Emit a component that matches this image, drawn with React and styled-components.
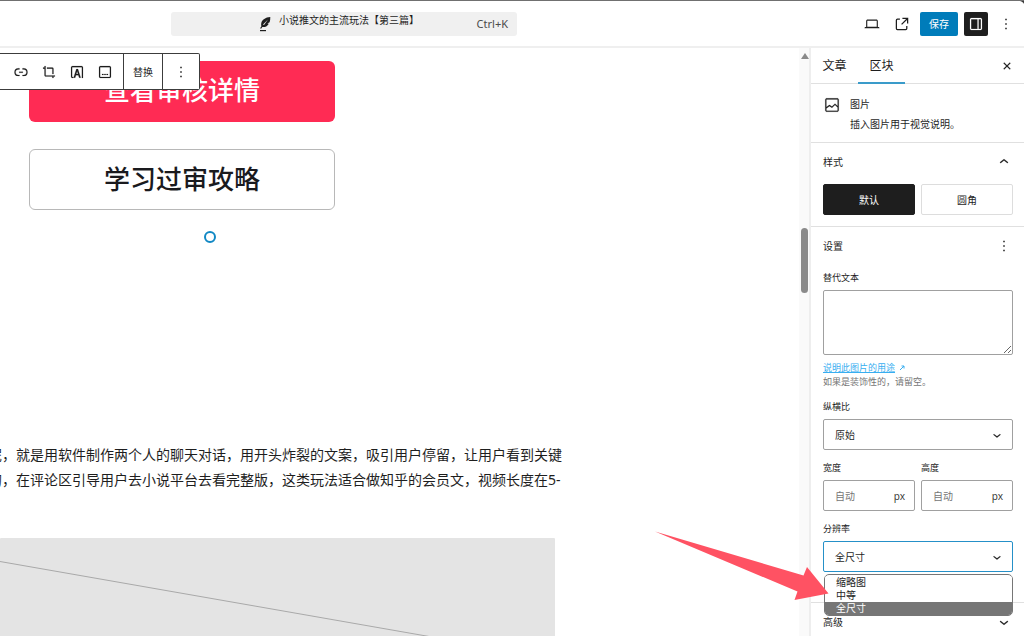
import React from "react";
import styled, { createGlobalStyle, css } from "styled-components";

const GlobalStyle = createGlobalStyle`
  *, *::before, *::after { box-sizing: border-box; }
  body {
    margin: 0;
    background: #fff;
    color: #1e1e1e;
    font-family: "Noto Sans", "Noto Sans CJK SC", sans-serif;
    font-size: 10px;
    line-height: 16px;
  }
  button, input, select, textarea { font: inherit; color: inherit; margin: 0; }
  h2, p, ul { margin: 0; padding: 0; font-size: inherit; font-weight: 400; }
`;

const paths = {
  link: "M10 17.389H8.444A5.194 5.194 0 1 1 8.444 7H10v1.5H8.444a3.694 3.694 0 0 0 0 7.389H10v1.5ZM14 7h1.556a5.194 5.194 0 0 1 0 10.39H14v-1.5h1.556a3.694 3.694 0 0 0 0-7.39H14V7Zm-4.5 6h5v-1.5h-5V13Z",
  crop: "M18 20v-2h2v-1.5H7.75a.25.25 0 0 1-.25-.25V4H6v2H4v1.5h2v8.75c0 .966.784 1.75 1.75 1.75h8.75v2H18ZM9.273 7.5h6.977a.25.25 0 0 1 .25.25v6.977H18V7.75A1.75 1.75 0 0 0 16.25 6H9.273v1.5Z",
  overlay:
    "M6 4a2 2 0 0 0-2 2v12a2 2 0 0 0 2 2h1v-1.5H6a.5.5 0 0 1-.5-.5V6a.5.5 0 0 1 .5-.5h12a.5.5 0 0 1 .5.5v14H20V6a2 2 0 0 0-2-2H6Zm5.1 4L7.4 19.5h2.2l1-3.1h3.2l1 3.1H17L13.3 8h-2.2Zm1.1 3 1.1 3.6h-2.2l1.1-3.6Z",
  caption:
    "M6 5.5h12a.5.5 0 0 1 .5.5v12a.5.5 0 0 1-.5.5H6a.5.5 0 0 1-.5-.5V6a.5.5 0 0 1 .5-.5ZM4 6a2 2 0 0 1 2-2h12a2 2 0 0 1 2 2v12a2 2 0 0 1-2 2H6a2 2 0 0 1-2-2V6Zm4 10h2v-1.5H8V16Zm5 0h-2v-1.5h2V16Zm1 0h2v-1.5h-2V16Z",
  more: "M13 19h-2v-2h2v2zm0-6h-2v-2h2v2zm0-6h-2V5h2v2z",
  laptop:
    "M20.5 16h-.7V8c0-1.1-.9-2-2-2H6.2c-1.1 0-2 .9-2 2v8h-.7c-.8 0-1.5.7-1.5 1.5h20c0-.8-.7-1.5-1.5-1.5zM5.7 8c0-.3.2-.5.5-.5h11.6c.3 0 .5.2.5.5v7.6H5.7V8z",
  external:
    "M19.5 4.5h-7V6h4.44l-5.97 5.97 1.06 1.06L18 7.06v4.44h1.5v-7Zm-13 1a2 2 0 0 0-2 2v10a2 2 0 0 0 2 2h10a2 2 0 0 0 2-2v-3H17v3a.5.5 0 0 1-.5.5h-10a.5.5 0 0 1-.5-.5v-10a.5.5 0 0 1 .5-.5h3V5.5h-3Z",
  drawer:
    "M18 4H6c-1.1 0-2 .9-2 2v12c0 1.1.9 2 2 2h12c1.1 0 2-.9 2-2V6c0-1.1-.9-2-2-2zm-4 14.5H6c-.3 0-.5-.2-.5-.5V6c0-.3.2-.5.5-.5h8v13zm4.5-.5c0 .3-.2.5-.5.5h-2.5v-13H18c.3 0 .5.2.5.5v12z",
  close:
    "M12 13.06l3.712 3.713 1.061-1.06L13.061 12l3.712-3.712-1.06-1.06L12 10.938 8.288 7.227l-1.061 1.06L10.939 12l-3.712 3.712 1.06 1.061L12 13.061z",
  image:
    "M19 3H5c-1.1 0-2 .9-2 2v14c0 1.1.9 2 2 2h14c1.1 0 2-.9 2-2V5c0-1.1-.9-2-2-2zM5 4.5h14c.3 0 .5.2.5.5v8.4l-3-2.9c-.3-.3-.8-.3-1 0L11.9 14 9 12c-.3-.2-.6-.2-.8 0l-3.7 2.6V5c0-.3.2-.5.5-.5zm14 15H5c-.3 0-.5-.2-.5-.5v-2.4l4.1-3 3 1.9c.3.2.7.2.9-.1L16 12l3.5 3.4V19c0 .3-.2.5-.5.5z",
  up: "M6.5 12.4L12 8l5.5 4.4-.9 1.2L12 10l-4.5 3.6-1-1.2z",
  down: "M17.5 11.6L12 16l-5.5-4.4.9-1.2L12 14l4.5-3.6 1 1.2z",
};

const Svg = styled.svg`
  display: block;
  flex: none;
  fill: currentColor;
`;

const Icon = ({ name, size = 18, bold }) => (
  <Svg viewBox="0 0 24 24" width={size} height={size} aria-hidden="true">
    <path
      fillRule="evenodd"
      stroke={bold ? "currentColor" : "none"}
      strokeWidth="0.2"
      d={paths[name]}
    />
  </Svg>
);

const Page = styled.div`
  position: relative;
  display: flex;
  flex-direction: column;
  height: 100vh;
  overflow: hidden;
  border-top: 1px solid #707070;
`;

const WindowCorner = styled.svg`
  position: absolute;
  top: 0;
  right: 0;
  fill: #3c3c3c;
`;

/* Top bar */
const Header = styled.header`
  display: flex;
  align-items: center;
  flex: none;
  height: 47px;
  padding: 0 6px 0 171px;
  border-bottom: 2px solid #efefef;
`;

const CommandBar = styled.button`
  display: flex;
  align-items: center;
  flex: 0 1 346px;
  height: 24px;
  padding: 0 9px 0 88px;
  border: 0;
  border-radius: 3px;
  background: #f0f0f0;
  text-align: left;
`;

const DocTitle = styled.span`
  flex: 1;
  height: 24px;
  margin-left: 8px;
  white-space: nowrap;
`;

const Shortcut = styled.kbd`
  font-family: inherit;
  font-size: 11px;
  color: #4a4a4a;
`;

const HeaderActions = styled.div`
  display: flex;
  align-items: center;
  gap: 6px;
  margin-left: auto;
`;

const IconButton = styled.button`
  display: flex;
  align-items: center;
  justify-content: center;
  width: ${(p) => p.$width || 24}px;
  height: 24px;
  padding: 0;
  border: 0;
  border-radius: 2px;
  background: ${(p) => (p.$pressed ? "#1e1e1e" : "none")};
  color: ${(p) => (p.$pressed ? "#fff" : "#1e1e1e")};
`;

const SaveButton = styled.button`
  width: 38px;
  height: 24px;
  padding: 0;
  border: 0;
  border-radius: 2px;
  background: #007cba;
  color: #fff;
`;

/* Editor canvas */
const Body = styled.div`
  display: flex;
  flex: 1;
  min-height: 0;
`;

const Canvas = styled.main`
  position: relative;
  flex: 1;
  min-width: 0;
  overflow: hidden;
`;

const BlockToolbar = styled.div`
  position: absolute;
  top: 5px;
  left: 0;
  display: flex;
  height: 37px;
  border: 1px solid #3c3c3c;
  border-left: 0;
  border-radius: 0 2px 2px 0;
  background: #fff;
`;

const ToolGroup = styled.div`
  display: flex;
  align-items: center;
  padding: ${(p) => p.$pad || "0"};
  & + & { border-left: 1px solid #3c3c3c; }
`;

const TextTool = styled.button`
  width: 38px;
  height: 24px;
  padding: 0;
  border: 0;
  background: none;
`;

const Figure = styled.figure`
  display: flex;
  flex-direction: column;
  gap: 27px;
  width: 306px;
  margin: 13px 0 0 29px;
`;

const Banner = styled.div`
  height: 61px;
  border-radius: 6px;
  font-size: 26px;
  font-weight: 500;
  line-height: 59px;
  text-align: center;
  ${(p) =>
    p.$filled
      ? css`
          background: #ff2b54;
          color: #fff;
        `
      : css`
          border: 1px solid #b8b8b8;
          color: #1a1a1e;
        `}
`;

const ResizeHandle = styled.span`
  display: block;
  width: 12px;
  height: 12px;
  margin: 21px 0 0 204px;
  border: 2px solid #1188c4;
  border-radius: 50%;
  background: #fff;
`;

const Paragraph = styled.p`
  margin: 199px 0 0 -12px;
  font-size: 14px;
  line-height: 25px;
  white-space: nowrap;
`;

const Placeholder = styled.div`
  width: 555px;
  max-width: 100%;
  margin-top: 46px;
  border-radius: 1px;
  background: #e4e4e4;
`;

const ScrollTrack = styled.div`
  flex: none;
  width: 12px;
  padding: 5px 2px 0;
  border-right: 2px solid #eee;
  background: #fafafa;
`;

const ScrollThumb = styled.div`
  width: 7px;
  height: 65px;
  margin-top: 169px;
  border-radius: 4px;
  background: #8a8a8a;
`;

/* Settings sidebar */
const Sidebar = styled.aside`
  flex: none;
  width: 213px;
  overflow: hidden;
`;

const TabRow = styled.div`
  display: flex;
  align-items: center;
  height: 36px;
  padding-right: 5px;
  border-bottom: 1px solid #e0e0e0;
`;

const Tab = styled.button`
  width: 47px;
  height: 36px;
  padding: 2px 0 0;
  border: 0;
  border-bottom: 2px solid ${(p) => (p.$active ? "#3a9bca" : "transparent")};
  background: none;
  font-size: 12px;
`;

const CloseSlot = styled.div`
  margin-left: auto;
`;

const BlockCard = styled.section`
  display: flex;
  gap: 9px;
  height: 59px;
  padding: 12px 11px 0 12px;
  border-bottom: 1px solid #e0e0e0;
`;

const CardText = styled.div`
  display: flex;
  flex-direction: column;
  gap: 4px;
`;

const Panel = styled.section`
  padding: ${(p) => p.$pad};
  border-bottom: 1px solid #e0e0e0;
`;

const PanelHead = styled.div`
  display: flex;
  align-items: center;
  justify-content: space-between;
  height: 24px;
  margin-right: -3px;
`;

const Split = styled.div`
  display: grid;
  grid-template-columns: 1fr 1fr;
  gap: 6px;
`;

const StyleButton = styled.button`
  height: 31px;
  padding: 0;
  border: 1px solid ${(p) => (p.$active ? "#1e1e1e" : "#ddd")};
  border-radius: 2px;
  background: ${(p) => (p.$active ? "#1e1e1e" : "#fff")};
  color: ${(p) => (p.$active ? "#fff" : "#1e1e1e")};
`;

const Styles = styled(Split)`
  margin-top: 10px;
`;

const Fields = styled.div`
  display: flex;
  flex-direction: column;
  gap: 12px;
  margin-top: 14px;
`;

const Field = styled.div`
  display: flex;
  flex-direction: column;
  gap: 6px;
  min-width: 0;
`;

const Label = styled.label`
  font-size: 9px;
  line-height: 12px;
`;

const TextArea = styled.textarea`
  display: block;
  width: 100%;
  height: 65px;
  border: 1px solid #a0a0a0;
  border-radius: 2px;
  resize: vertical;
`;

const Help = styled.p`
  color: #757575;
  font-size: 9px;
  line-height: 14px;
`;

const HelpLink = styled.a`
  color: #38aef0;
  text-decoration: underline;
`;

const LinkArrow = styled.svg`
  margin-left: 4px;
  fill: none;
  stroke: #38aef0;
`;

const Control = styled.div`
  position: relative;
  display: flex;
  align-items: center;
  height: 31px;
  border: 1px solid ${(p) => (p.$focused ? "#2590c8" : "#a0a0a0")};
  border-radius: 2px;
  background: #fff;
`;

const Select = styled.select`
  width: 100%;
  height: 29px;
  padding: 0 28px 0 11px;
  border: 0;
  outline: 0;
  background: none;
  appearance: none;
`;

const SelectArrow = styled.span`
  position: absolute;
  right: 7px;
  pointer-events: none;
`;

const NumberInput = styled.input`
  flex: 1;
  width: 0;
  height: 29px;
  padding: 0 0 0 11px;
  border: 0;
  outline: 0;
  background: none;
  &::placeholder { color: #757575; opacity: 1; }
`;

const Unit = styled.span`
  padding-right: 9px;
  color: #3c3c3c;
`;

const OptionList = styled.ul`
  position: absolute;
  z-index: 1;
  top: 32px;
  left: 0;
  right: -1px;
  padding-top: 1px;
  overflow: hidden;
  border: 1px solid #767676;
  border-radius: 5px;
  background: #fff;
  list-style: none;
`;

const Option = styled.li`
  padding-left: 11px;
  line-height: 13px;
  background: ${(p) => (p.$selected ? "#767676" : "#fff")};
  color: ${(p) => (p.$selected ? "#fff" : "#1e1e1e")};
`;

const Pointer = styled.svg`
  position: absolute;
  z-index: 2;
  top: 530px;
  right: 195px;
  fill: #ff5263;
  pointer-events: none;
`;

const SelectField = ({ id, label, value, focused, children }) => (
  <Field>
    <Label htmlFor={id}>{label}</Label>
    <Control $focused={focused}>
      <Select id={id} defaultValue={value}>
        <option>{value}</option>
      </Select>
      <SelectArrow>
        <Icon name="down" size={16} bold />
      </SelectArrow>
      {children}
    </Control>
  </Field>
);

const SizeField = ({ id, label }) => (
  <Field>
    <Label htmlFor={id}>{label}</Label>
    <Control>
      <NumberInput id={id} placeholder="自动" />
      <Unit>px</Unit>
    </Control>
  </Field>
);

const tools = [
  ["link", "链接"],
  ["crop", "裁剪"],
  ["overlay", "在图片上添加文字"],
  ["caption", "添加说明文字"],
];

export default function App() {
  return (
    <Page>
      <GlobalStyle />
      <Header>
        <CommandBar>
          <Svg viewBox="0 0 12 16" width="12" height="16" aria-hidden="true">
            <path
              fillRule="evenodd"
              d="M11.300 1C6.500 1.300 3 3.800 2.300 7c-.3 1.300-.2 2.400.1 3.300L1.100 12.200l1 .5 1.200-1.600c3.400.2 5.500-1.300 6.500-3.400L8.300 7.400l2.300-1.200c.5-1.600.8-3.400.7-5.200ZM9 3.500 5 8.900l-1-.5L9 3.500Z"
            />
            <path d="M1 14h6v1.200H1z" />
          </Svg>
          <DocTitle>小说推文的主流玩法【第三篇】</DocTitle>
          <Shortcut>Ctrl+K</Shortcut>
        </CommandBar>
        <HeaderActions>
          <IconButton aria-label="预览"><Icon name="laptop" /></IconButton>
          <IconButton aria-label="查看文章"><Icon name="external" size={20} /></IconButton>
          <SaveButton>保存</SaveButton>
          <IconButton $pressed aria-label="设置"><Icon name="drawer" bold /></IconButton>
          <IconButton aria-label="选项"><Icon name="more" /></IconButton>
        </HeaderActions>
      </Header>

      <Body>
        <Canvas>
          <Figure>
            <Banner $filled>查看审核详情</Banner>
            <Banner>学习过审攻略</Banner>
          </Figure>
          <ResizeHandle />
          <Paragraph>
            呢，就是用软件制作两个人的聊天对话，用开头炸裂的文案，吸引用户停留，让用户看到关键
            <br />
            的，在评论区引导用户去小说平台去看完整版，这类玩法适合做知乎的会员文，视频长度在5-
          </Paragraph>
          <Placeholder>
            <Svg viewBox="0 0 555 120" width="100%" height="120" preserveAspectRatio="none" aria-hidden="true">
              <path d="M0 23.500 L555 120.500" fill="none" stroke="#a9a9a9" />
            </Svg>
          </Placeholder>
          <BlockToolbar>
            <ToolGroup $pad="0 4px 0 7px">
              {tools.map(([name, label]) => (
                <IconButton key={name} $width={28} aria-label={label}>
                  <Icon name={name} bold />
                </IconButton>
              ))}
            </ToolGroup>
            <ToolGroup><TextTool>替换</TextTool></ToolGroup>
            <ToolGroup>
              <IconButton $width={36} aria-label="选项"><Icon name="more" /></IconButton>
            </ToolGroup>
          </BlockToolbar>
        </Canvas>

        <ScrollTrack>
          <Svg viewBox="0 0 8 6" width="8" height="6" aria-hidden="true">
            <path d="M4 0 8 6H0Z" fill="#8a8a8a" />
          </Svg>
          <ScrollThumb />
        </ScrollTrack>

        <Sidebar>
          <TabRow>
            <Tab>文章</Tab>
            <Tab $active>区块</Tab>
            <CloseSlot>
              <IconButton aria-label="关闭设置"><Icon name="close" bold /></IconButton>
            </CloseSlot>
          </TabRow>
          <BlockCard>
            <Icon name="image" bold />
            <CardText>
              <h2>图片</h2>
              <p>插入图片用于视觉说明。</p>
            </CardText>
          </BlockCard>
          <Panel $pad="7px 11px 11px 12px">
            <PanelHead>
              <h2>样式</h2>
              <IconButton aria-label="收起样式"><Icon name="up" bold /></IconButton>
            </PanelHead>
            <Styles>
              <StyleButton $active>默认</StyleButton>
              <StyleButton>圆角</StyleButton>
            </Styles>
          </Panel>
          <Panel $pad="7px 11px 30px 12px">
            <PanelHead>
              <h2>设置</h2>
              <IconButton aria-label="设置选项"><Icon name="more" /></IconButton>
            </PanelHead>
            <Fields>
              <Field>
                <Label htmlFor="alt">替代文本</Label>
                <TextArea id="alt" />
                <Help>
                  <HelpLink href="#alt">说明此图片的用途</HelpLink>
                  <LinkArrow viewBox="0 0 6 6" width="6" height="6" aria-hidden="true">
                    <path d="M1 5 5 1M2.500 1H5V3.500" />
                  </LinkArrow>
                  <br />
                  如果是装饰性的，请留空。
                </Help>
              </Field>
              <SelectField id="ratio" label="纵横比" value="原始" />
              <Split>
                <SizeField id="width" label="宽度" />
                <SizeField id="height" label="高度" />
              </Split>
              <SelectField id="resolution" label="分辨率" value="全尺寸" focused>
                <OptionList role="listbox" aria-label="分辨率">
                  <Option role="option">缩略图</Option>
                  <Option role="option">中等</Option>
                  <Option role="option" $selected aria-selected="true">全尺寸</Option>
                </OptionList>
              </SelectField>
            </Fields>
          </Panel>
          <Panel $pad="7px 11px 7px 12px">
            <PanelHead>
              <h2>高级</h2>
              <IconButton aria-label="展开高级"><Icon name="down" bold /></IconButton>
            </PanelHead>
          </Panel>
        </Sidebar>
      </Body>

      <WindowCorner viewBox="0 0 4 3" width="4" height="3" aria-hidden="true">
        <path d="M0 0h4v3C3.500 1.500 2 .5 0 0Z" />
      </WindowCorner>
      <Pointer viewBox="0 0 174 70" width="174" height="70" aria-hidden="true">
        <path d="M0 0.500 148.500 44.500 152 36 173.500 62.500 139.500 69 142.500 60.500Z" />
      </Pointer>
    </Page>
  );
}
